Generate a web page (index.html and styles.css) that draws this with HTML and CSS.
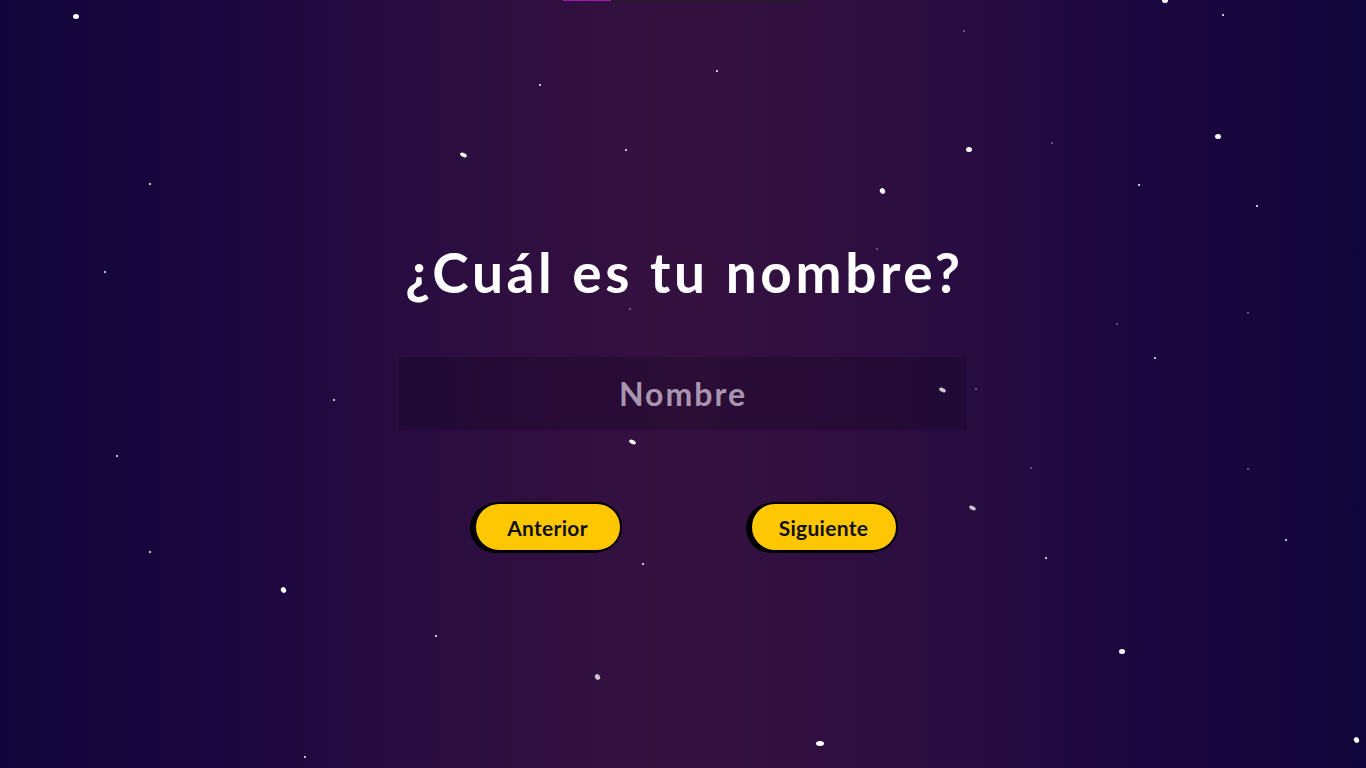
FILE: index.html
```html
<!DOCTYPE html>
<html lang="es">
<head>
<meta charset="utf-8">
<title>¿Cuál es tu nombre?</title>
<link rel="stylesheet" href="styles.css">
</head>
<body>
<div class="scene">
  <div class="progress"><div class="progress-fill"></div></div>
  <div class="stars">
    <span class="star s-lg" style="left:73px;top:14px"></span>
    <span class="star" style="left:716px;top:70px"></span>
    <span class="star" style="left:539px;top:84px"></span>
    <span class="star s-oval" style="left:460px;top:153px"></span>
    <span class="star" style="left:625px;top:149px"></span>
    <span class="star s-lg" style="left:966px;top:147px"></span>
    <span class="star s-lg" style="left:1215px;top:134px"></span>
    <span class="star" style="left:1222px;top:14px"></span>
    <span class="star s-lg" style="left:1162px;top:-2px"></span>
    <span class="star s-faint" style="left:963px;top:30px"></span>
    <span class="star" style="left:149px;top:183px"></span>
    <span class="star s-tall" style="left:880px;top:188px"></span>
    <span class="star" style="left:1138px;top:184px"></span>
    <span class="star" style="left:1256px;top:205px"></span>
    <span class="star s-faint" style="left:1051px;top:142px"></span>
    <span class="star" style="left:104px;top:271px"></span>
    <span class="star s-faint" style="left:876px;top:248px"></span>
    <span class="star s-faint" style="left:629px;top:308px"></span>
    <span class="star s-faint" style="left:1116px;top:323px"></span>
    <span class="star s-faint" style="left:1247px;top:312px"></span>
    <span class="star" style="left:1154px;top:357px"></span>
    <span class="star" style="left:333px;top:399px"></span>
    <span class="star s-oval" style="left:939px;top:388px"></span>
    <span class="star s-faint" style="left:975px;top:388px"></span>
    <span class="star s-oval" style="left:629px;top:440px"></span>
    <span class="star" style="left:116px;top:455px"></span>
    <span class="star s-faint" style="left:1030px;top:467px"></span>
    <span class="star s-faint" style="left:1247px;top:468px"></span>
    <span class="star s-oval s-dim" style="left:969px;top:506px"></span>
    <span class="star" style="left:1285px;top:539px"></span>
    <span class="star" style="left:149px;top:551px"></span>
    <span class="star" style="left:1045px;top:557px"></span>
    <span class="star" style="left:642px;top:563px"></span>
    <span class="star s-tall" style="left:281px;top:587px"></span>
    <span class="star" style="left:435px;top:635px"></span>
    <span class="star s-lg" style="left:1119px;top:649px"></span>
    <span class="star s-tall s-dim" style="left:595px;top:674px"></span>
    <span class="star" style="left:304px;top:756px"></span>
    <span class="star s-wide" style="left:816px;top:741px"></span>
    <span class="star s-tall" style="left:1354px;top:737px"></span>
  </div>

  <main class="content">
    <h1 class="title">¿Cuál es tu nombre?</h1>
    <input class="name-input" type="text" placeholder="Nombre">
    <div class="actions">
      <button class="btn" type="button">Anterior</button>
      <button class="btn" type="button">Siguiente</button>
    </div>
  </main>
</div>
</body>
</html>
```

FILE: styles.css
```css
* { box-sizing: border-box; }

html, body {
  margin: 0;
  padding: 0;
  height: 100%;
}

body {
  font-family: "Lato", "Open Sans", "Liberation Sans", sans-serif;
  overflow: hidden;
}

.scene {
  position: relative;
  width: 100%;
  height: 100vh;
  background: linear-gradient(to right, #10053a 0%, #1d0840 18%, #2d0e40 35%, #35113f 50%, #2d0e40 65%, #1d0840 82%, #10053a 100%);
  overflow: hidden;
}

.progress {
  position: absolute;
  top: 0;
  left: 563px;
  width: 241px;
  height: 1px;
  background: #1f1f1f;
}

.progress-fill {
  width: 48px;
  height: 100%;
  background: #a21cb4;
}

.stars {
  position: absolute;
  inset: 0;
  pointer-events: none;
}

.star {
  position: absolute;
  width: 2px;
  height: 2px;
  border-radius: 50%;
  background: #ffffff;
}

.s-lg { width: 6px; height: 5px; }
.s-oval { width: 7px; height: 4px; transform: rotate(25deg); }
.s-tall { width: 5px; height: 6px; transform: rotate(-30deg); }
.s-wide { width: 8px; height: 5px; }
.s-faint { opacity: 0.4; }
.s-dim { opacity: 0.75; }

.content {
  position: relative;
  display: flex;
  flex-direction: column;
  align-items: center;
  padding-top: 234px;
}

.title {
  margin: 0;
  color: #ffffff;
  font-size: 55px;
  font-weight: 700;
  line-height: 76px;
  letter-spacing: 3.6px;
  padding-left: 3px;
}

.name-input {
  margin-top: 47px;
  width: 568px;
  height: 73px;
  border: none;
  outline: none;
  background: rgba(10, 0, 20, 0.22);
  color: #ffffff;
  text-align: center;
  font-family: "Lato", "Open Sans", sans-serif;
  font-size: 32px;
  font-weight: 700;
  letter-spacing: 2px;
}

.name-input::placeholder {
  color: #a995b0;
  opacity: 1;
}

.actions {
  margin-top: 72px;
  display: flex;
  gap: 128px;
  padding-left: 5px;
}

.btn {
  width: 148px;
  height: 50px;
  border: 2px solid #000000;
  border-radius: 25px;
  background: #ffc700;
  box-shadow: -4px 1px 0 #000000;
  color: #111111;
  font-family: "Lato", "Open Sans", sans-serif;
  font-size: 21px;
  font-weight: 700;
  letter-spacing: 0.3px;
  cursor: pointer;
  padding: 0;
}
```
